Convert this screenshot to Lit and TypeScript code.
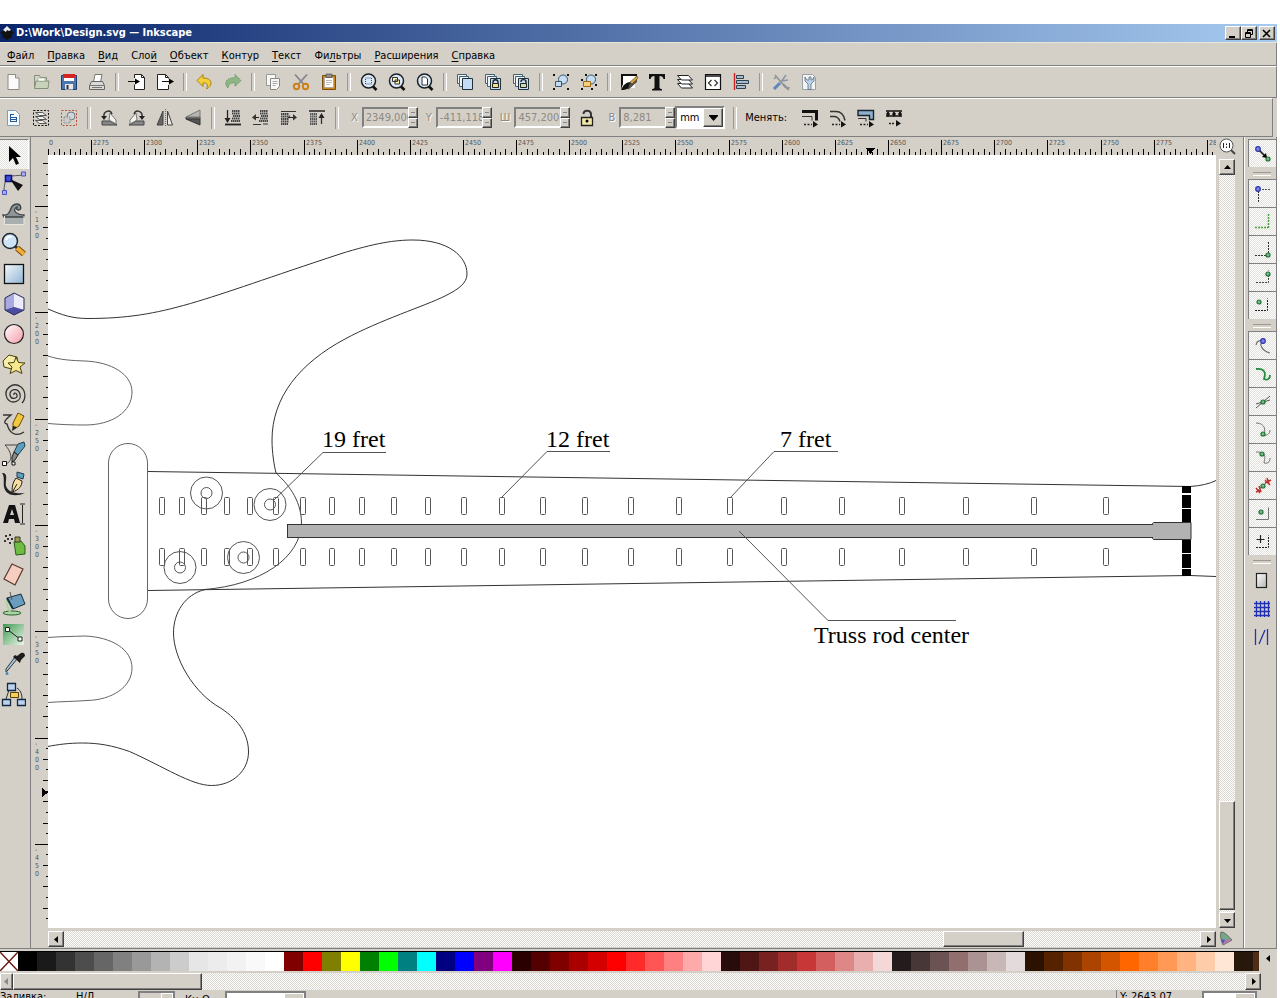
import { LitElement, html, svg, css, SVGTemplateResult } from "lit";
import { customElement } from "lit/decorators.js";
import { classMap } from "lit/directives/class-map.js";

type Icon = [string, SVGTemplateResult];
const SEP = "sep";

// ---------- shared icon parts ----------
const page = svg`<path d="M5 2.500h7.500l3.500 3.500v11.500h-11z" fill="#fbfbfa" stroke="#8b8b88"/><path d="M12.500 2.500v3.500h3.500" fill="#e4e4e2" stroke="#8b8b88"/>`;
const lens = svg`<path d="M13.500 14l4 4" stroke="#111" stroke-width="2.600"/><circle cx="9.500" cy="9" r="7" fill="#dbe8f6" stroke="#1a2026" stroke-width="1.500"/>`;
const stack = svg`<path d="M2.500 2.500h9v9h-9z" fill="#eef3f8" stroke="#43606f"/><path d="M4.500 4.500h9v10h-9z" fill="#eef3f8" stroke="#43606f"/>`;
const flat = svg`<path d="M7.500 6.500h10v11h-10z" fill="#c5ddf3" stroke="#20323c"/>`;
const sketchRows = svg`<path d="M9 3h8M9 5.500h8M10 8h7M9 10.500h8M8 13h9" stroke="#444" stroke-width="1.800" stroke-dasharray="1.500 .5"/>`;

const mainBar: (Icon | string)[] = [
  ["Создать", page],
  ["Открыть", svg`<path d="M3.500 15.500v-12h5l1 2h6v3" fill="#cfd6c2" stroke="#84907a"/><path d="M3.500 16.500l1.500-7.500h13l-1 7.500z" fill="#c9d3bb" stroke="#84907a"/><path d="M7 6h7v3h-7z" fill="#fff" stroke="#9aa38f" stroke-width=".6"/>`],
  ["Сохранить", svg`<path d="M2.500 3.500h15v14h-15z" fill="#4c76b0" stroke="#1f3d6c"/><path d="M5 2h10v7h-10z" fill="#fff"/><path d="M4 2h12v4h-12z" fill="#d42424"/><path d="M6 12h8v5.500h-8z" fill="#e8e8e8"/><path d="M7.500 13h2v4h-2z" fill="#333"/>`],
  ["Печать", svg`<path d="M6.500 10l1.500-7.500h7l-1.500 7.500z" fill="#fff" stroke="#777"/><path d="M2.500 13.500l2-4h11l2 4v4h-15z" fill="#d9d9d6" stroke="#666"/><path d="M3 13.500h14M5 15.500h10" stroke="#777"/>`],
  SEP,
  ["Импорт", svg`<path d="M7.500 6v-3.500h7l3 3v12h-10v-5" fill="#fff" stroke="#222"/><path d="M14.500 2.500v3h3" fill="none" stroke="#222"/><path d="M1 9.500h8" stroke="#111"/><path d="M8 6.500l5 3-5 3z"/>`],
  ["Экспорт", svg`<path d="M13.500 13v4.500h-11v-15h8l3 3v1" fill="#fff" stroke="#222"/><path d="M10.500 2.500v3h3" fill="none" stroke="#222"/><path d="M7 9.500h8" stroke="#111"/><path d="M14 6.500l5 3-5 3z"/>`],
  SEP,
  ["Отменить", svg`<path d="M8 2.500l-6 6 6 6v-3.500c4-.5 5.500 1.500 3.500 6 6.500-3.500 6.500-11-3.500-11z" fill="#f3cf3c" stroke="#a8820e"/>`],
  ["Вернуть", svg`<path d="M12 2.500l6 6-6 6v-3.500c-4-.5-6 .5-7 5-5-5-1-11 7-10z" fill="#8fb585" stroke="#64905a" stroke-dasharray="1.500 1"/>`],
  SEP,
  ["Копировать", svg`<path d="M3.500 2.500h9v11h-9z" fill="#f7f7f5" stroke="#999"/><path d="M7.500 6.500h9v8l-3 3h-6z" fill="#f7f7f5" stroke="#888"/><path d="M9.500 9.500h5M9.500 11.500h5M9.500 13.500h3" stroke="#aaa"/>`],
  ["Вырезать", svg`<path d="M4 2.500l8.500 9.500M16 2.500l-8.500 9.500" stroke="#86868a" stroke-width="1.800"/><circle cx="5.500" cy="14.500" r="2.700" fill="none" stroke="#cd8118" stroke-width="2"/><circle cx="14.500" cy="14.500" r="2.700" fill="none" stroke="#cd8118" stroke-width="2"/>`],
  ["Вставить", svg`<path d="M3.500 3.500h13v14h-13z" fill="#c88721" stroke="#7b4d0b"/><path d="M5.500 5.500h9v10h-9z" fill="#fff" stroke="#999" stroke-width=".6"/><path d="M7 2h6v3.500h-6z" fill="#8c8c88" stroke="#444" stroke-width=".6"/><path d="M7 8.500h6M7 10.500h6M7 12.500h4" stroke="#bbb"/>`],
  SEP,
  ["Выделение в окно", svg`${lens}<rect x="6.500" y="6" width="6" height="6" fill="none" stroke="#2e4e72" stroke-dasharray="1 1"/>`],
  ["Рисунок в окно", svg`${lens}<path d="M5.500 5.500h5v4h-5zM8 8h4.500v4h-4.500z" fill="#fff0b8" stroke="#333"/>`],
  ["Страница в окно", svg`${lens}<path d="M7 5h3.500l2 2v6h-5.500z" fill="#fff" stroke="#333"/>`],
  SEP,
  ["Дублировать", svg`${stack}${flat}`],
  ["Клонировать", svg`${stack}${flat}<path d="M10 11v-1c0-3 5-3 5 0v1.500" fill="none" stroke="#222" stroke-width="1.400"/><path d="M9.500 11.500h6v4h-6z" fill="#f6df86" stroke="#222"/>`],
  ["Отсоединить клон", svg`${stack}${flat}<path d="M10 10v-.5c0-2.500 5-2.500 5 0v2" fill="none" stroke="#222" stroke-width="1.400"/><path d="M9.500 11.500h6v4h-6z" fill="#c8e0b0" stroke="#222"/>`],
  SEP,
  ["Сгруппировать", svg`<circle cx="12" cy="7.500" r="4.500" fill="#c5ddf3" stroke="#38556d"/><path d="M4.500 9.500h6v5h-6z" fill="#c5ddf3" stroke="#38556d"/><path d="M2 2h2v2h-2zM16 2h2v2h-2zM2 16h2v2h-2zM16 16h2v2h-2z" fill="#111"/>`],
  ["Разгруппировать", svg`<circle cx="12" cy="7.500" r="4.500" fill="#c5ddf3" stroke="#38556d"/><path d="M4.500 9.500h7v5h-7z" fill="#f6cf78" stroke="#a06a18"/><path d="M6 2h2v2h-2zM16 2h2v2h-2zM16 12h2v2h-2zM2 7h2v2h-2zM2 16h2v2h-2zM12 16h2v2h-2z" fill="#111"/>`],
  SEP,
  ["Заливка и обводка", svg`<path d="M3 3h13v13h-13z" fill="#fff"/><path d="M2 2h16v2h-14v8l-2 5z" fill="#111"/><path d="M2 18c2-5 5-8 10-8l3 2c-3 4-8 6-13 6z" fill="#111"/><path d="M9 18l9-8v-6l-8 9z" fill="#55534f"/><path d="M11 10l7-6 1 2-6 6z" fill="#d3a545" stroke="#5b430f" stroke-width=".6"/>`],
  ["Текст и шрифт", svg`<path d="M2 2h16v5h-1.500c-.5-2-1.500-3-4-3v11c0 1.500 1 2 2.500 2v1.500h-10v-1.500c1.500 0 2.500-.5 2.500-2v-11c-2.500 0-3.500 1-4 3h-1.500z" fill="#111"/>`],
  ["Слои", svg`<path d="M2.500 11.500h11l4 4.500h-11z" fill="#fff" stroke="#222"/><path d="M2.500 7.500h11l4 4.500h-11z" fill="#fff" stroke="#222"/><path d="M2.500 3.500h11l4 4.500h-11z" fill="#fff" stroke="#222"/>`],
  ["Редактор XML", svg`<path d="M2.500 2.500h15v15h-15z" fill="#fff" stroke="#111" stroke-width="1.200"/><path d="M2 4h16" stroke="#111" stroke-width="1.500"/><path d="M8.500 8l-3 3 3 3M11.500 8l3 3-3 3" fill="none" stroke="#333" stroke-width="1.200"/>`],
  ["Выровнять", svg`<path d="M3.500 1v17" stroke="#d02020" stroke-width="1.400"/><path d="M5.500 3.500h7v3h-7zM5.500 8.500h12v3h-12zM5.500 13.500h9v3h-9z" fill="#a8bccb" stroke="#2b4250"/>`],
  SEP,
  ["Настройки", svg`<path d="M4 3l11 13" stroke="#8d9296" stroke-width="1.500"/><path d="M10 10l5-7M5 5l-2 2M11 9l6-1" stroke="#8a98a4" stroke-width="1.600"/><path d="M9 11l-6 6" stroke="#5d86bd" stroke-width="3"/><path d="M12 12l5 5 1-2" stroke="#8e9498" stroke-width="2" fill="none"/>`],
  ["Свойства документа", svg`<path d="M3.500 2.500h10l3 3v12h-13z" fill="#f4f4f2" stroke="#99a0a5"/><path d="M6 5v4l3 3v5.500h3v-5.500l3-3v-4l-2 3h-1v-3h-2v3h-2z" fill="#bcd2e8" stroke="#5b6f80" stroke-width=".8"/>`],
];

const moveHead = svg`<path d="M4 16.500h8" stroke="#222" stroke-width="1.500" stroke-dasharray="2 1.500"/><path d="M13 13l5 3.500-5 3z" fill="#111"/>`;

const selectBar: (Icon | string)[] = [
  ["Выделить всё", svg`<path d="M4.500 2.500h8l4 4v11h-12z" fill="#f4f9fe" stroke="#7f9db8"/><path d="M7 6.500h4M7 9.500h7M7 11.500h7M7 13.500h7" stroke="#245a94"/><path d="M7.500 6v8M13.500 9v5" stroke="#245a94"/>`],
  ["Выделить во всех слоях", svg`<rect x="2.500" y="2.500" width="15" height="15" fill="none" stroke="#111" stroke-dasharray="2 1.500"/><path d="M4.500 12.500h7l4 3h-7zM4.500 8.500h7l4 3h-7zM4.500 4.500h7l4 3h-7z" fill="#f2f2f0" stroke="#555"/>`],
  ["Снять выделение", svg`<rect x="2.500" y="2.500" width="15" height="15" fill="none" stroke="#b4523c" stroke-dasharray="2 1.500"/><circle cx="12" cy="8" r="4" fill="#ccd7df" stroke="#777"/><path d="M5 9h6v6h-6z" fill="#ccc" stroke="#888" stroke-dasharray="1.500 1"/>`],
  SEP,
  ["Повернуть влево", svg`<path d="M3 13h8l7 4h-15z" fill="#888" stroke="#444"/><path d="M11 5l6 7v4l-7-4z" fill="#f1f1ee" stroke="#777"/><path d="M5 9c-1-6 6-8 8-3" fill="none" stroke="#333" stroke-width="1.500"/><path d="M2 8h6l-3 4z" fill="#222"/>`],
  ["Повернуть вправо", svg`<path d="M17 13h-8l-7 4h15z" fill="#888" stroke="#444"/><path d="M9 5l-6 7v4l7-4z" fill="#f1f1ee" stroke="#777"/><path d="M15 9c1-6-6-8-8-3" fill="none" stroke="#333" stroke-width="1.500"/><path d="M12 8h6l-3 4z" fill="#222"/>`],
  ["Отразить горизонтально", svg`<path d="M8 3v14h-6z" fill="#666" stroke="#444"/><path d="M12.500 3l5 14h-5z" fill="#e8e8e6" stroke="#444"/><path d="M10.500 1v17" stroke="#666" stroke-dasharray="1 1"/>`],
  ["Отразить вертикально", svg`<path d="M17 2v7h-14z" fill="#b8b6b2" stroke="#777"/><path d="M17 11v6l-14-6z" fill="#555" stroke="#333"/><path d="M2 10h16" stroke="#333"/>`],
  SEP,
  ["Опустить на задний план", svg`${sketchRows}<path d="M4.500 2v10" stroke="#222" stroke-width="1.300"/><path d="M1.500 10h6l-3 5z" fill="#222"/><path d="M2 16.500h16" stroke="#222" stroke-width="1.800"/>`],
  ["Опустить", svg`${sketchRows}<path d="M2 9.500h6" stroke="#222"/><path d="M5 6l-4 3.500 4 3z" fill="#333"/><path d="M2 16.500h8M12 16h5" stroke="#333"/>`],
  ["Поднять", svg`<path d="M2 6h8M2 8.500h9M2 11h8M2 13.500h8M2 16h7" stroke="#444" stroke-width="1.800" stroke-dasharray="1.500 .5"/><path d="M9 9.500h7" stroke="#222"/><path d="M14 6l4 3.500-4 3z" fill="#333"/><path d="M2 3.500h15" stroke="#333"/>`],
  ["Поднять на передний план", svg`<path d="M2 3h16" stroke="#222" stroke-width="1.500"/><path d="M3 6h7M3 8.500h7M3 11h7M3 13.500h7M3 16h7" stroke="#555" stroke-width="1.800" stroke-dasharray="1.500 .5"/><path d="M14.500 8v8" stroke="#333" stroke-width="1.300"/><path d="M11.500 10h6l-3-5z" fill="#222"/>`],
  SEP,
];

const affectBar: Icon[] = [
  ["Менять толщину обводки", svg`<path d="M2 3.500h14.500v9" fill="none" stroke="#111" stroke-width="3"/><path d="M2 8.500h10v4" fill="none" stroke="#333"/>${moveHead}`],
  ["Менять радиус углов", svg`<path d="M2 3.500h6c6 0 8 4 9 9" fill="none" stroke="#333" stroke-width="1.500"/><path d="M2 8.500h4c3 0 5 2 6 5" fill="none" stroke="#333" stroke-width="1.500"/>${moveHead}`],
  ["Менять градиенты", svg`<path d="M2 2.500h15.500v9h-4v-4h-11.500z" fill="#8fb0cc" stroke="#17242e" stroke-width="1.400"/><path d="M2 10.500h8v3" fill="none" stroke="#333"/>${moveHead}`],
  ["Менять текстуры", svg`<path d="M2 3h16M2 8h16" stroke="#111" stroke-width="1.500"/><path d="M4 3l2 3-2 3-2-3zM10 3l2 3-2 3-2-3zM16 3l2 3-2 3-2-3z" fill="#111"/><path d="M5 15.500h6" stroke="#222" stroke-width="1.500" stroke-dasharray="2 1"/><path d="M12 12l5 3.500-5 3z" fill="#111"/>`],
];

const lockIcon = svg`<path d="M6.500 6c0-5 8-4 7.500 1v3" fill="none" stroke="#333" stroke-width="2"/><path d="M4.500 9.500h11v8h-11z" fill="#f1e7a8" stroke="#222" stroke-width="1.300"/><circle cx="10" cy="13" r="1.500"/>`;

// Tool box icons, 26 x 26
const penBody = svg`<path d="M18 3l6-2 1 4-7 9-4-3z" fill="#5f9fbe" stroke="#1d3d4d"/>`;
const tools: Icon[] = [
  ["Выделитель", svg`<path d="M9 4v16l4-4 3 7 3-1.500-3-6.500h5z" fill="#000"/>`],
  ["Узлы", svg`<path d="M4 22c0-8 1-14 5-16s9-1 13-2" fill="none" stroke="#555"/><path d="M5.500 4.500h6v6h-6z" fill="#4450d8" stroke="#0c1484" stroke-width="1.600"/><path d="M2.500 19.500h4v4h-4zM21.500 1h4v4h-4z" fill="#a9acf0" stroke="#4a52c8"/><path d="M10 8l13 6-5 6z" fill="#111"/>`],
  ["Корректор", svg`<path d="M4 14h20v10h-20z" fill="#a9aeaf"/><path d="M3 14c10 1 5-11 14-11 4 0 5 5 2 6-2 0-3-1-2-3-6 3 0 8 7 8v2h-20z" fill="#8f9596" stroke="#3b4446" stroke-width="1.300"/><path d="M4.500 15v8.500h19.500v-8.500" fill="none" stroke="#e6e6e4"/>`],
  ["Масштаб", svg`<path d="M15 15l3 3" stroke="#333" stroke-width="3"/><path d="M17 17l7 6" stroke="#7a4d0c" stroke-width="6"/><path d="M17 17l7 6" stroke="#f0ae38" stroke-width="4"/><circle cx="10" cy="10" r="7.500" fill="#cfe3f6" stroke="#1b2733" stroke-width="1.500"/><path d="M6 9c1-3 4-4 6-3" fill="none" stroke="#fff" stroke-width="2"/>`],
  ["Прямоугольник", svg`<rect x="4.500" y="3.500" width="19" height="19" fill="url(#gBlue)" stroke="#111" stroke-width="1.300"/>`],
  ["Параллелепипед", svg`<path d="M5 7l9-5 10 5v12l-10 5-9-5z" fill="#8e90cf"/><path d="M5 7l9-5v14l-9 3z" fill="#a9abe0"/><path d="M14 2l10 5v12l-10-3z" fill="#ececf8"/><path d="M5 19l9-3 10 3-10 5z" fill="#4a4da0"/><path d="M5 7l9-5 10 5v12l-10 5-9-5z" fill="none" stroke="#26285e"/>`],
  ["Эллипс", svg`<circle cx="14" cy="13" r="9.500" fill="url(#gPink)" stroke="#222" stroke-width="1.200"/>`],
  ["Звезда", svg`<path d="M3 10l6-6 8 2 1 8-6 4-8-2z" fill="#f6eda8" stroke="#4b3e10"/><path d="M16 6l2.500 5.500 6.500.5-5 4 2 6.500-6-3-6 3 2-6.500-4-4 6-.5z" fill="#f8e88c" stroke="#4b3e10"/>`],
  ["Спираль", svg`<path d="M14 14c-1-2 2-3 3 0 1 4-6 5-7 0-1-6 8-8 10-1 2 8-9 11-13 4-4-9 6-17 14-11 5 4 5 12 1 16" fill="none" stroke="#333" stroke-width="1.300"/>`],
  ["Карандаш", svg`<path d="M3 4h8c-5 4-9 8-4 9 2 8 8 14 17 8" fill="none" stroke="#333" stroke-width="1.300"/><path d="M18 2l6 3-5 10-6 4v-7z" fill="#f2c93e" stroke="#69470b"/><path d="M13 15l-1 5 5-4z" fill="#222"/>`],
  ["Кривые Безье", svg`<path d="M4 23c10-1 8-12 1-19h12" fill="none" stroke="#444"/>${penBody}<path d="M14 11l4 3-3 5-3 2 0-5z" fill="#888" stroke="#222"/><path d="M2.500 20.500h4v4h-4zM12 21h3v3h-3z" fill="#fff" stroke="#111"/>`],
  ["Каллиграфия", svg`<path d="M2 2c7 0 3 8 4 13 2 6 9 8 19 7-9 4-19 3-21-6-1-5 1-10-2-14z" fill="#222"/><path d="M17 1l7 2-1 5-6-2z" fill="#5f9fbe" stroke="#1d3d4d"/><path d="M16 7l6 3c0 5-3 9-10 11 0-6 1-10 4-14z" fill="#f7dda2" stroke="#222"/><path d="M13 20l4-7" stroke="#222"/>`],
  ["Текст", svg`<path d="M3 22l6-18h6l5 18h-5l-1-4h-5l-1 4zM10 14h4l-2-6z" fill="#111" fill-rule="evenodd"/><path d="M22.500 4v18M20 3h5M20 23h5" stroke="#222"/>`],
  ["Распылитель", svg`<path d="M14 11l7-1 4 5v8l-9 1z" fill="#6fbc45" stroke="#2a5c17"/><path d="M15 6h5v5h-5z" fill="#999a55" stroke="#3a3a20"/><path d="M5 4h2v2h-2zM9 3h2v2h-2zM7 7h2v2h-2zM11 7h2v2h-2zM4 9h2v2h-2zM9 11h2v2h-2z" fill="#333"/>`],
  ["Ластик", svg`<path d="M12 3l11 5-8 16-11-6z" fill="#f6cdbf" stroke="#55382f" stroke-width="1.200"/>`],
  ["Заливка", svg`<ellipse cx="12" cy="22" rx="9" ry="2" fill="#a9d5a0" stroke="#2c5f33"/><path d="M8 8c-4 3 1 9 2 13" fill="none" stroke="#a9d5a0" stroke-width="2"/><path d="M7 7l14-4 4 10-12 5z" fill="#6a9dbd" stroke="#17303f"/><path d="M7 7l6 11" stroke="#17303f" stroke-width="2"/><path d="M10 1l2 8" stroke="#555"/>`],
  ["Градиент", svg`<rect x="3" y="3" width="21" height="21" fill="url(#gGreen)"/><path d="M8 9l12 9" stroke="#222"/><path d="M5.500 6.500h4v4h-4zM18 16h4v4h-4z" fill="#fff" stroke="#222"/>`],
  ["Пипетка", svg`<path d="M17 8l-9 11-2 2 0-3 9-12z" fill="#a6c8de" stroke="#333"/><path d="M13 6l7 6 1-3 4-4c0-3-2-4-4-3l-4 3-2-1z" fill="#1c1c1c"/><path d="M7 20c-2 2-2 4 0 4s2-2 0-4z" fill="#5b8fb3"/>`],
  ["Соединитель", svg`<path d="M6 18l3-9M22 18c0-6-2-9-5-11" stroke="#333" fill="none"/><path d="M7.500 2.500h8v7h-8zM2.500 18.500h8v6h-8zM17.500 18.500h8v6h-8z" fill="#bcd3ee" stroke="#15263f" stroke-width="1.300"/><path d="M10.500 11.500h8v5h-8z" fill="#f6cf58" stroke="#5c4206"/>`],
];

// Snap bar icons, 28 x 28
const green = (x: number, y: number) => svg`<circle cx=${x} cy=${y} r="2" fill="#79b98a" stroke="#1e7234" stroke-width="1.200"/>`;
const blue = (x: number, y: number) => svg`<circle cx=${x} cy=${y} r="2.300" fill="#7f86e0" stroke="#2a33b0" stroke-width="1.200"/>`;
const snaps: { on: boolean; items: Icon[] }[] = [
  { on: true, items: [["Прилипание", svg`<path d="M10 10l7 7" stroke="#111" stroke-width="1.600"/><path d="M18 18l-5-1 4-4z"/>${blue(9, 9)}${green(19, 19)}`]] },
  {
    on: true,
    items: [
      ["Рамки", svg`<path d="M10 9.500h12" stroke="#555" stroke-dasharray="2 1"/><path d="M9.500 11v11" stroke="#333" stroke-dasharray="2 1"/>${blue(9, 9)}`],
      ["Края рамки", svg`<path d="M6 19.500h13" stroke="#4aa53c" stroke-width="1.500" stroke-dasharray="2 1"/><path d="M19.500 6v14" stroke="#4aa53c" stroke-width="1.500" stroke-dasharray="2 1"/>`],
      ["Углы рамки", svg`<path d="M6 19.500h13M19.500 6v12" stroke="#333" stroke-dasharray="2 1"/>${green(19, 19)}`],
      ["Середины краёв", svg`<path d="M7 18.500h12.500v-12" fill="none" stroke="#444" stroke-dasharray="2 1"/>${green(19, 10)}`],
      ["Центры рамок", svg`<path d="M6 18.500h12.500v-12" fill="none" stroke="#222" stroke-dasharray="2 1"/>${green(10, 10)}`],
    ],
  },
  {
    on: true,
    items: [
      ["Узлы", svg`<path d="M7 13c1-5 5-5 7-3-5 1-1 9 7 11" fill="none" stroke="#777" stroke-width="1.200"/>${blue(14, 9)}`],
      ["Контуры", svg`<path d="M7 9c9-1 10 4 8 10 4 2 6-1 6-4" fill="none" stroke="#238a3c" stroke-width="1.800"/>`],
      ["Пересечения", svg`<path d="M7 20l14-12M7 16l14-4" stroke="#555"/>${green(14, 14)}`],
      ["Острые узлы", svg`<path d="M7 7c10 0 10 9 7 12 5 1 7-2 7-5" fill="none" stroke="#777"/>${green(14, 18)}`],
      ["Гладкие узлы", svg`<path d="M7 8c11 0 9 5 8 11 5 1 6-2 6-5" fill="none" stroke="#777"/>${green(13, 10)}`],
      ["Середины линий", svg`<path d="M7 20l13-12" stroke="#777"/><path d="M7 16l4 5M10 14l2 6M16 8l5 5M18 6l2 6M7 20l5-2M16 11l6-3" stroke="#c22f2f" stroke-width="1.500"/>${green(14, 14)}`],
      ["Центры объектов", svg`<path d="M7 19.500h12.500v-12" fill="none" stroke="#777"/>${green(12, 12)}`],
      ["Центры вращения", svg`<path d="M11.500 7v8M7.500 11.500h8" stroke="#222" stroke-width="1.200"/><path d="M7 19.500h12.500v-12" fill="none" stroke="#222" stroke-dasharray="2 1"/>`],
    ],
  },
  {
    on: false,
    items: [
      ["Край страницы", svg`<rect x="8.500" y="6.500" width="10" height="14" fill="url(#gPage)" stroke="#222" stroke-width="1.200"/>`],
      ["Сетка", svg`<path d="M8.500 6v16M12.500 6v16M16.500 6v16M20.500 6v16M6 8.500h16M6 12.500h16M6 16.500h16M6 20.500h16" stroke="#2030b4" stroke-width="1.300"/>`],
      ["Направляющие", svg`<path d="M7.500 6v16M19.500 6v16M11 21l6-14" stroke="#2334a8" stroke-width="1.300"/>`],
    ],
  },
];

const palette: string[] = (
  "000000 1a1a1a 333333 4d4d4d 666666 808080 999999 b3b3b3 cccccc e6e6e6 ececec f2f2f2 f9f9f9 ffffff " +
  "800000 ff0000 808000 ffff00 008000 00ff00 008080 00ffff 000080 0000ff 800080 ff00ff " +
  "2b0000 550000 800000 aa0000 d40000 ff0000 ff2a2a ff5555 ff8080 ffaaaa ffd5d5 " +
  "280b0b 501616 782121 a02c2c c83737 d35f5f de8787 e9afaf f4d7d7 " +
  "241c1c 483737 6c5353 916f6f ac9393 c8b7b7 e3dbdb " +
  "2b1100 552200 803300 aa4400 d45500 ff6600 ff7f2a ff9955 ffb380 ffccaa ffe6d5 28170b 502d16"
).split(" ");

// [text before the mnemonic, mnemonic, text after it]
const menus: [string, string, string][] = [
  ["", "Ф", "айл"], ["", "П", "равка"], ["", "В", "ид"], ["Сло", "й", ""], ["", "О", "бъект"],
  ["", "К", "онтур"], ["", "Т", "екст"], ["Фи", "л", "ьтры"], ["", "Р", "асширения"], ["", "С", "правка"],
];

const frets = [162, 182, 204, 227, 250, 276, 303, 332, 362, 394, 428, 464, 502, 543, 585, 631, 679, 730, 784, 842, 902, 966, 1034, 1106];
const bolts = [[206.5, 493], [270, 504.5], [243.5, 557.5], [180, 567.5]];

@customElement("app-root")
export class AppRoot extends LitElement {
  static styles = css`
    :host {
      display: flex; flex-direction: column; height: 100vh; box-sizing: border-box;
      padding: 24px 3px 0 0; overflow: hidden; background: #fff; color: #000;
      font: 11px/14px "DejaVu Sans Condensed", "DejaVu Sans", sans-serif;
    }
    * { box-sizing: border-box; }
    button { margin: 0; padding: 0; border: 0; background: none; color: inherit; font: inherit; display: flex; align-items: center; justify-content: center; flex: none; }
    svg { display: block; flex: none; }
    .raised { background: #d4d0c8; border: 1px solid; border-color: #fff #404040 #404040 #fff; box-shadow: inset -1px -1px #808080; }
    .checker { background: repeating-conic-gradient(#fff 0 25%, #d9d6cf 0 50%) 0 0 / 2px 2px; }
    .title {
      flex: none; height: 19px; display: flex; align-items: center; padding: 0 2px 0 0;
      background: linear-gradient(90deg, #0a246a, #a6caf0); border-bottom: 1px solid #e4e8d8; color: #fff; font-weight: bold;
    }
    .title h1 { flex: 1; margin: 0; padding-left: 2px; font: inherit; }
    .wbtn { width: 16px; height: 14px; }
    .wbtn.close { margin-left: 2px; }
    .logo { width: 14px; height: 16px; }
    .menu { flex: none; height: 23px; display: flex; align-items: center; gap: 13px; padding: 3px 7px 0; background: #d4d0c8; border-bottom: 1px solid #808080; border-right: 1px solid #808080; }
    .menu u { text-underline-offset: 2px; }
    .bar { flex: none; display: flex; align-items: center; gap: 8px; padding-left: 3px; background: #d4d0c8; border-top: 1px solid #fff; border-bottom: 1px solid #808080; border-right: 1px solid #808080; }
    .bar.commands { height: 32px; }
    .bar.options { height: 39px; margin-right: 4px; box-shadow: 4px 0 #d4d0c8; }
    .bar button { width: 20px; height: 20px; }
    .rule { flex: none; width: 4px; height: 18px; display: flex; justify-content: center; }
    .rule::before { content: ""; width: 2px; height: 100%; border-left: 1px solid #9c988f; border-right: 1px solid #fff; }
    .rule.tall { height: 22px; }
    .fields { display: flex; align-items: center; gap: 4px; }
    .fields .lock { width: 26px; }
    .field { display: flex; align-items: center; }
    .field label { padding: 0 4px; color: #8d8a83; text-shadow: 1px 1px #fff; }
    .field input { width: 46px; height: 21px; padding: 0 0 0 2px; border: 2px solid; border-color: #808080 #d4d0c8 #fff #808080; border-right: 0; background: #d4d0c8; color: #8d8a83; font: inherit; border-radius: 0; }
    .spin { width: 10px; height: 21px; display: flex; flex-direction: column; }
    .bar .spin button { width: 10px; height: auto; flex: 1; }
    .unit { display: flex; height: 23px; width: 50px; border: 2px solid; border-color: #808080 #fff #fff #808080; background: #fff; }
    .unit select { appearance: none; flex: 1; min-width: 0; padding: 0 0 0 3px; border: 0; border-radius: 0; background: #fff; color: #000; font: inherit; }
    .unit span { width: 20px; display: flex; align-items: center; justify-content: center; }
    .affect { padding-right: 5px; }
    .main { flex: 1; min-height: 0; display: grid; grid-template-columns: 31px 17px minmax(0, 1fr) 27px 34px; background: #d4d0c8; border-bottom: 1px solid #808080; }
    .tools { display: flex; flex-direction: column; padding-top: 2px; border-right: 1px solid #808080; overflow: hidden; }
    .tools button { width: 29px; height: 30px; justify-content: flex-start; }
    .tools button.on { border-top: 1px solid #808080; border-right: 1px solid #fff; background: repeating-conic-gradient(#fff 0 25%, #e2e0da 0 50%) 0 0 / 2px 2px; }
    .work { grid-column: 2 / 5; display: grid; grid-template-columns: 17px minmax(0, 1fr) 27px; grid-template-rows: 18px minmax(0, 1fr) 20px; }
    .work svg.fill { width: 100%; height: 100%; overflow: hidden; }
    .sheet { background: #fff; overflow: hidden; }
    .num { font: 7px "DejaVu Sans Condensed", "DejaVu Sans", sans-serif; fill: #555; }
    .note { font: 24px "Liberation Serif", serif; fill: #000; }
    .vscroll { display: flex; flex-direction: column; width: 16px; margin-left: 3px; padding: 4px 0 0; }
    .vscroll button { width: 16px; height: 16px; }
    .hscroll { display: flex; height: 16px; margin-top: 3px; }
    .hscroll button { width: 16px; height: 16px; }
    .track { flex: 1; min-width: 0; min-height: 0; display: flex; }
    .vscroll .track { flex-direction: column; }
    .part { flex-grow: var(--n); flex-basis: 0; }
    .corner { display: flex; align-items: center; justify-content: flex-start; padding-left: 2px; }
    .snap { grid-column: 5; display: flex; flex-direction: column; gap: 12px; padding: 2px 1px 0 4px; border-left: 1px solid #808080; border-right: 1px solid #808080; box-shadow: inset 1px 0 #fff; overflow: hidden; }
    .snap div { display: flex; flex-direction: column; position: relative; }
    .snap div + div::before { content: ""; position: absolute; top: -7px; left: 5px; width: 18px; height: 2px; border-top: 1px solid #9c988f; border-bottom: 1px solid #fff; }
    .snap button { width: 28px; height: 28px; }
    .snap .on button { border-top: 1px solid #808080; border-left: 1px solid #808080; background: repeating-conic-gradient(#fff 0 25%, #e2e0da 0 50%) 0 0 / 2px 2px; }
    .palette { flex: none; display: flex; height: 24px; padding-top: 2px; background: #d4d0c8; }
    .swatches { flex: 1; display: flex; height: 20px; border-top: 1px solid #000; overflow: hidden; }
    .swatches button { width: 19px; height: 19px; background: var(--c); }
    .swatches .none { width: 18px; background: #fff; }
    .more { width: 18px; height: 14px; }
    .pscroll { flex: none; display: flex; height: 17px; padding-right: 16px; background: #d4d0c8; }
    .pscroll button { width: 16px; height: 17px; }
    .pscroll .cut { width: 13px; }
    .status { flex: none; display: flex; height: 8px; padding-right: 20px; overflow: hidden; background: #d4d0c8; line-height: 14px; }
    .status .fill { width: 76px; }
    .status .val { width: 62px; }
    .status .well { height: 20px; margin-top: 1px; border: 2px solid #808080; display: flex; justify-content: flex-end; }
    .status .well i { width: 12px; background: #d4d0c8; border: 1px solid #fff; }
    .status .stroke { width: 37px; margin-right: 10px; }
    .status .opacity { width: 40px; padding-top: 3px; }
    .status .layer { width: 81px; background: #fff; }
    .status .layer i, .status .zoom i { width: 20px; }
    .status .coords { margin-left: auto; width: 86px; padding-left: 3px; border-left: 1px solid #808080; }
    .status .zoom { width: 55px; background: #fff; }
  `;

  private button([name, art]: Icon, size: number, on = false) {
    return html`<button class=${classMap({ on })} aria-label=${name}><svg width=${size} height=${size} viewBox="0 0 ${size} ${size}" fill="#000">${art}</svg></button>`;
  }

  private strip(items: (Icon | string)[], tall = false) {
    return items.map((i) => (typeof i === "string" ? html`<span class=${classMap({ rule: true, tall })}></span>` : this.button(i, 20)));
  }

  private arrow(dir: "l" | "r" | "u" | "d", color = "#000") {
    const d = { l: "M6 1v7l-4-3.500z", r: "M3 1v7l4-3.500z", u: "M1 6h7l-3.500-4z", d: "M1 3h7l-3.500 4z" }[dir];
    return html`<svg width="9" height="9"><path d=${d} fill=${color}></path></svg>`;
  }

  private field(id: string, label: string, value: string) {
    return html`<label for=${id}>${label}</label><input id=${id} .value=${value} disabled />
      <span class="spin"><button class="raised" disabled aria-label="Больше"><svg width="4" height="1"><rect width="4" height="1" fill="#888"></rect></svg></button><button class="raised" disabled aria-label="Меньше"><svg width="4" height="1"><rect width="4" height="1" fill="#888"></rect></svg></button></span>`;
  }

  private track(before: number, thumb: number, after: number) {
    return html`<div class="track checker"><span class="part" style="--n:${before}"></span><span class="part raised" style="--n:${thumb}"></span><span class="part" style="--n:${after}"></span></div>`;
  }

  private topRuler() {
    const out: SVGTemplateResult[] = [];
    for (let i = -8; i < 222; i++) {
      const x = Math.round(43 + i * 5.3135);
      const major = i % 10 === 0;
      const h = major ? 15 : i % 2 === 0 ? 6 : 3;
      out.push(svg`<rect x=${x} y=${18 - h} width="1" height=${h}></rect>`);
      if (major) out.push(svg`<text class="num" x=${x + 2} y="8">${2275 + (i / 10) * 25}</text>`);
    }
    return svg`<text class="num" x="1" y="8">0</text>${out}<path d="M818 11h9l-4.500 6z"></path>`;
  }

  private sideRuler() {
    const out: SVGTemplateResult[] = [];
    for (let i = -4; i < 68; i++) {
      const y = Math.round(51 + i * 10.63);
      const major = i % 10 === 0;
      const w = major ? 13 : i % 2 === 0 ? 5 : 2;
      out.push(svg`<rect x=${17 - w} y=${y} width=${w} height="1"></rect>`);
      if (major) {
        const label = `-${150 + i * 5}`;
        out.push(svg`${[...label].map((c, k) => svg`<text class="num" x="4" y=${y + 8 + k * 8}>${c}</text>`)}`);
      }
    }
    return svg`${out}<path d="M11 633v9l6-4.500z"></path>`;
  }

  private drawing() {
    return svg`<g transform="translate(-48 -155)" fill="none" stroke="#333" stroke-width="1">
      <path d="M48 309c14 6 24 9.500 40 9.500C165 318.500 200 300 340 254c35-11 55-14 73-14c35 0 54 16 54 34c0 9-8 15-22 22c-20 10-65 24-100 43c-45 24-73 58-73 101c0 12 2 25 4 33"/>
      <path d="M276 473c10 9 25.500 26 25.500 50c-1 35-41 62-97 66.500" stroke="#444"/>
      <path d="M205 589.500c-20 5-31.500 23-31.500 43.500c0 25 20 60 47 75c20 13 28 28 28 44c0 18-15 33.500-37 33.500c-20 0-48-19-82-34c-17-6-31-8.500-47-8.500c-14 0-24 1.500-35 3.500"/>
      <g stroke="#666">
        <path d="M48 356c12 4 24 4.500 37 5c26 1 47 13 47 31c0 20-20 33-47 33c-13 0-25-.5-37-1.500"/>
        <path d="M48 637.500c12-1 24-1 37-1.500c26 1 47 13 47 32c0 19-20 32-45 32.500c-14 1-26 1-39 2"/>
        <rect x="108.500" y="443.500" width="39" height="175" rx="19.500"/>
      </g>
      <path d="M148 471.500L1190 486.500q16-1 26-6M148 590.500L1190 575.500l26 1"/>
      <g stroke="#555">
        ${frets.map((x) => svg`<rect x=${x - 2.5} y="497.500" width="5" height="17" rx="1"/><rect x=${x - 2.5} y="548.500" width="5" height="17" rx="1"/>`)}
        ${bolts.map(([x, y]) => svg`<circle cx=${x} cy=${y} r="16"/><circle cx=${x} cy=${y} r="5.500"/>`)}
      </g>
      <path d="M1182 486h9v7h-9zM1182 495h9v13h-9zM1182 509h9v44h-9zM1182 554h9v14h-9zM1182 569h9v7h-9z" fill="#000" stroke="none"/>
      <rect x="287.500" y="524.500" width="866" height="13" fill="#b2b2b2"/>
      <path d="M1152.500 525v-1.500l1-1h37.500v17h-37.500l-1-1v-1.500" fill="#b2b2b2"/>
      <path d="M274 500L323 452.500h63M501 498L547 451.500h63M730 498L774 451.500h64M739 531L828 620.500h128" stroke="#555"/>
      <g stroke="none">
        <text class="note" x="322" y="447">19 fret</text>
        <text class="note" x="546" y="447">12 fret</text>
        <text class="note" x="780" y="447">7 fret</text>
        <text class="note" x="814" y="643">Truss rod center</text>
      </g>
    </g>`;
  }

  render() {
    return html`
      <header class="title">
        <svg class="logo" viewBox="0 0 14 16"><path d="M7 1l7 7-3 2 1 2-5 3-5-3 1-2-3-2z" fill="#111"></path><path d="M7 1l4 4-2 1-2-1-1 2-3-2z" fill="#e8ecf2"></path></svg>
        <h1>D:\\Work\\Design.svg — Inkscape</h1>
        <button class="wbtn raised" aria-label="Свернуть"><svg width="10" height="9"><path d="M1 7h6v2h-6z"></path></svg></button>
        <button class="wbtn raised" aria-label="Восстановить"><svg width="10" height="9" fill="none" stroke="#000"><path d="M3.500 3v-2.500h5v5h-2M3 1.500h6M1.500 3.500h5v5h-5zM1 4.500h6"></path></svg></button>
        <button class="wbtn raised close" aria-label="Закрыть"><svg width="10" height="9" stroke="#000" stroke-width="1.600"><path d="M1 1l7 7M8 1l-7 7"></path></svg></button>
      </header>
      <nav class="menu">${menus.map(([a, m, b]) => html`<button><span>${a}<u>${m}</u>${b}</span></button>`)}</nav>
      <div class="bar commands">${this.strip(mainBar)}</div>
      <div class="bar options">
        ${this.strip(selectBar, true)}
        <div class="fields">
          <span class="field">${this.field("x", "X", "2349,000")}</span>
          <span class="field">${this.field("y", "Y", "-411,118")}</span>
          <span class="field">${this.field("w", "Ш", "457,200")}</span>
          <button class="lock" aria-label="Сохранять пропорции"><svg width="20" height="20">${lockIcon}</svg></button>
          <span class="field">${this.field("h", "В", "8,281")}
            <span class="unit"><select aria-label="Единица измерения"><option>mm</option></select><span class="raised"><svg width="9" height="6"><path d="M0 0h9v1l-4.500 5-4.500-5z"></path></svg></span></span>
          </span>
        </div>
        <span class="rule tall"></span>
        <span class="affect">Менять:</span>
        ${this.strip(affectBar)}
      </div>
      <main class="main">
        <div class="tools">
          ${tools.map((t, i) => this.button([t[0], svg`<defs>
            <linearGradient id="gBlue" x2="1" y2="1"><stop stop-color="#f4f8fc"/><stop offset="1" stop-color="#8fb4d4"/></linearGradient>
            <linearGradient id="gPink" x2="1" y2="1"><stop stop-color="#fff"/><stop offset="1" stop-color="#f59aa8"/></linearGradient>
            <linearGradient id="gGreen" x2="1" y2="1"><stop stop-color="#3f9a50"/><stop offset="1" stop-color="#eaf6ea"/></linearGradient></defs>${t[1]}`], 26, i === 0))}
        </div>
        <div class="work">
          <span></span>
          <svg class="fill" shape-rendering="crispEdges">${this.topRuler()}</svg>
          <button class="corner" aria-label="Масштаб 1:1"><svg width="18" height="18"><path d="M13 13l4 4" stroke="#444" stroke-width="2"></path><circle cx="8.500" cy="8.500" r="6.500" fill="#fff" stroke="#555"></circle><path d="M5.500 6v5M11.500 6v5M8.500 6.500v1.500M8.500 9.500v1.500" stroke="#222"></path></svg></button>
          <svg class="fill" shape-rendering="crispEdges">${this.sideRuler()}</svg>
          <div class="sheet"><svg class="fill">${this.drawing()}</svg></div>
          <div class="vscroll">
            <button class="raised" aria-label="Вверх">${this.arrow("u")}</button>
            ${this.track(628, 107, 2)}
            <button class="raised" aria-label="Вниз">${this.arrow("d")}</button>
          </div>
          <span></span>
          <div class="hscroll">
            <button class="raised" aria-label="Влево">${this.arrow("l")}</button>
            ${this.track(881, 79, 176)}
            <button class="raised" aria-label="Вправо">${this.arrow("r")}</button>
          </div>
          <button class="corner" aria-label="Управление цветом"><svg width="16" height="16"><path d="M3 2c4 0 8 5 11 8l-9 5c-2-4-3-9-2-13z" fill="#74a88a" stroke="#666"></path><path d="M4 12l5-3 5 1-9 5z" fill="#b07aa8"></path><path d="M3 9l2 5 2-4z" fill="#4c58b8"></path></svg></button>
        </div>
        <div class="snap">
          ${snaps.map((g) => html`<div class=${classMap({ on: g.on })}>${g.items.map((i) => this.button([i[0], svg`<defs><linearGradient id="gPage" x2="1" y2="1"><stop stop-color="#fff"/><stop offset="1" stop-color="#b5b5b0"/></linearGradient></defs>${i[1]}`], 28))}</div>`)}
        </div>
      </main>
      <div class="palette">
        <div class="swatches">
          <button class="none" aria-label="Нет"><svg width="18" height="19" stroke="#6b1a10" stroke-width="1.500"><path d="M0 0l18 19M18 0l-18 19"></path></svg></button>
          ${palette.map((c) => html`<button aria-label="#${c}" style="--c:#${c}"></button>`)}
        </div>
        <button class="more" aria-label="Палитры">${this.arrow("l")}</button>
      </div>
      <div class="pscroll">
        <button class="raised cut" aria-label="Влево">${this.arrow("l", "#888")}</button>
        ${this.track(0, 187, 1045)}
        <button class="raised" aria-label="Вправо">${this.arrow("r")}</button>
      </div>
      <footer class="status">
        <span class="fill">Заливка:</span><span class="val">Н/Д</span>
        <span class="well stroke"><i></i></span>
        <span class="opacity">Кц О:</span>
        <span class="well layer"><i></i></span>
        <span class="coords">Y: 2643,07</span>
        <span class="well zoom"><i></i></span>
      </footer>
    `;
  }
}
